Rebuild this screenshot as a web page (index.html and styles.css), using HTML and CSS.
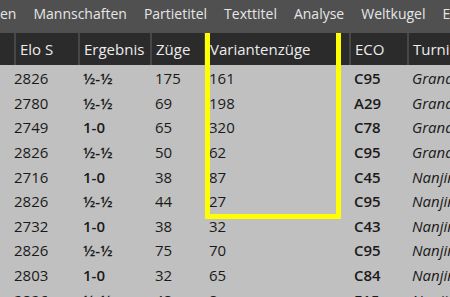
FILE: index.html
```html
<!DOCTYPE html>
<html lang="de">
  <head>
    <meta charset="UTF-8" />
    <meta name="viewport" content="width=device-width, initial-scale=1.0" />
    <title>Partien</title>
    <link rel="stylesheet" href="styles.css">
  </head>

  <body>
    <!-- Menüleiste -->
    <div class="menu">
      <span class="menu-item">en</span>
      <span class="menu-item">Mannschaften</span>
      <span class="menu-item">Partietitel</span>
      <span class="menu-item">Texttitel</span>
      <span class="menu-item">Analyse</span>
      <span class="menu-item">Weltkugel</span>
      <span class="menu-item">Extras</span>
    </div>

    <!-- Partieliste -->
    <div class="list">
      <div class="row head">
        <div class="cell"></div>
        <div class="cell">Elo S</div>
        <div class="cell">Ergebnis</div>
        <div class="cell">Züge</div>
        <div class="cell">Variantenzüge</div>
        <div class="cell">ECO</div>
        <div class="cell">Turnier</div>
      </div>
      <div id="rows"></div>
      <div class="mark"></div>
    </div>

    <script>
      const partien = [
        { elo: "2826", erg: "½-½", zuege: 175, var: 161, eco: "C95", turnier: "Grand Chess Tour" },
        { elo: "2780", erg: "½-½", zuege: 69, var: 198, eco: "A29", turnier: "Grand Chess Tour" },
        { elo: "2749", erg: "1-0", zuege: 65, var: 320, eco: "C78", turnier: "Grand Chess Tour" },
        { elo: "2826", erg: "½-½", zuege: 50, var: 62, eco: "C95", turnier: "Grand Chess Tour" },
        { elo: "2716", erg: "1-0", zuege: 38, var: 87, eco: "C45", turnier: "Nanjing Pearl Spring" },
        { elo: "2826", erg: "½-½", zuege: 44, var: 27, eco: "C95", turnier: "Nanjing Pearl Spring" },
        { elo: "2732", erg: "1-0", zuege: 38, var: 32, eco: "C43", turnier: "Nanjing Pearl Spring" },
        { elo: "2826", erg: "½-½", zuege: 75, var: 70, eco: "C95", turnier: "Nanjing Pearl Spring" },
        { elo: "2803", erg: "1-0", zuege: 32, var: 65, eco: "C84", turnier: "Nanjing Pearl Spring" },
        { elo: "2826", erg: "½-½", zuege: 48, var: 8, eco: "E15", turnier: "Nanjing Pearl Spring" },
      ];

      function tampilkanPartien() {
        const rows = document.getElementById("rows");
        partien.forEach((p) => {
          const row = document.createElement("div");
          row.className = "row";
          row.innerHTML =
            '<div class="cell"></div>' +
            '<div class="cell elo">' + p.elo + "</div>" +
            '<div class="cell bold">' + p.erg + "</div>" +
            '<div class="cell">' + p.zuege + "</div>" +
            '<div class="cell">' + p.var + "</div>" +
            '<div class="cell bold">' + p.eco + "</div>" +
            '<div class="cell italic">' + p.turnier + "</div>";
          rows.appendChild(row);
        });
      }

      tampilkanPartien();
    </script>
  </body>
</html>
```

FILE: styles.css
```css
body {
  margin: 0;
  width: 450px;
  height: 297px;
  overflow: hidden;
  background-color: #c0c0c0;
  font-family: "Open Sans", "Noto Sans", sans-serif;
  font-size: 15px;
}

.menu {
  display: flex;
  gap: 17px;
  height: 33px;
  padding-top: 4px;
  box-sizing: border-box;
  background-color: #505050;
  color: #e6e6e6;
  font-size: 14px;
  white-space: nowrap;
  overflow: hidden;
}

.list {
  position: relative;
}

.row {
  display: grid;
  grid-template-columns: 14px 64px 72px 54px 145px 58px 60px;
  height: 24.6px;
  align-items: center;
  color: #1a1a1a;
  white-space: nowrap;
}

.row.head {
  height: 32px;
  margin-bottom: 1px;
  background-color: #2b2b2b;
  color: #ececec;
}

.cell {
  overflow: hidden;
  padding-left: 5px;
}

.head .cell {
  height: 100%;
  display: flex;
  align-items: center;
  box-sizing: border-box;
  border-left: 2px solid #474747;
  padding-left: 4px;
}

.head .cell:first-child {
  border-left: none;
}

.elo {
  padding-left: 0;
}

.bold {
  font-weight: 600;
}

.italic {
  font-style: italic;
}

/* gelbe Markierung */
.mark {
  position: absolute;
  left: 205px;
  top: 0;
  width: 136px;
  height: 186px;
  box-sizing: border-box;
  border: 5px solid #ffff00;
  border-top: none;
}
```
